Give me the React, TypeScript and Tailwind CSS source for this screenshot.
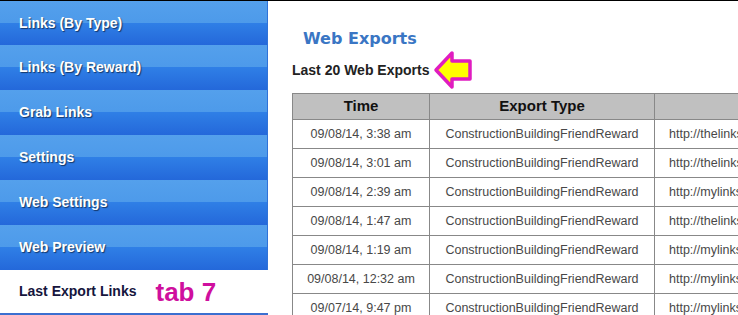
const navItems = ['Links (By Type)', 'Links (By Reward)', 'Grab Links', 'Settings', 'Web Settings', 'Web Preview'];

const exportsList = [
  { time: '09/08/14, 3:38 am', type: 'ConstructionBuildingFriendReward', url: 'http://thelinks' },
  { time: '09/08/14, 3:01 am', type: 'ConstructionBuildingFriendReward', url: 'http://thelinks' },
  { time: '09/08/14, 2:39 am', type: 'ConstructionBuildingFriendReward', url: 'http://mylinks' },
  { time: '09/08/14, 1:47 am', type: 'ConstructionBuildingFriendReward', url: 'http://thelinks' },
  { time: '09/08/14, 1:19 am', type: 'ConstructionBuildingFriendReward', url: 'http://mylinks' },
  { time: '09/08/14, 12:32 am', type: 'ConstructionBuildingFriendReward', url: 'http://mylinks' },
  { time: '09/07/14, 9:47 pm', type: 'ConstructionBuildingFriendReward', url: 'http://mylinks' },
];

function PointerArrow() {
  return (
    <svg width="40" height="42" viewBox="0 0 40 42" className="ml-[4px] shrink-0">
      <polygon
        points="3,21 19,4 19,12 37,12 37,30 19,30 19,38"
        fill="#ffff00"
        stroke="#e01cc0"
        strokeWidth="3.5"
        strokeLinejoin="round"
      />
    </svg>
  );
}

export default function App() {
  return (
    <div className="flex h-[315px] w-[738px] overflow-hidden border-t border-black bg-white font-['Liberation_Sans',Arial,sans-serif]">
      <nav className="flex w-[268px] shrink-0 flex-col">
        {navItems.map((label, i) => (
          <div
            key={label}
            className={`flex ${i === 0 ? 'h-[44px]' : 'h-[45px]'} items-center border-r border-[#2f72d8] bg-[linear-gradient(to_bottom,#54a0ec_0%,#4d9aea_50%,#2f7fe6_50%,#2468da_100%)] pl-[19px] text-[14px] font-bold text-white [text-shadow:1px_1px_1px_rgba(0,0,0,0.55)]`}
          >
            {label}
          </div>
        ))}
        <div className="flex h-[45px] items-center border-b-2 border-[#3b6fd0] bg-white pl-[19px]">
          <span className="text-[14px] font-bold text-[#15153d]">Last Export Links</span>
          <span className="ml-[19px] text-[26px] font-bold leading-none text-[#cf0f9e]">tab 7</span>
        </div>
      </nav>

      <main className="min-w-0 flex-1 overflow-hidden pl-[24px] pt-[28px]">
        <h1 className="pl-[11px] font-['DejaVu_Sans',Verdana,sans-serif] text-[16px] font-bold leading-[20px] text-[#3a76c4]">Web Exports</h1>
        <div className="flex items-center">
          <h2 className="text-[14px] font-bold text-[#222]">Last 20 Web Exports</h2>
          <PointerArrow />
        </div>
        <table className="mt-[2px] w-[640px] table-fixed border-collapse border border-[#888] text-[12.5px] text-[#484848]">
          <colgroup>
            <col className="w-[137px]" />
            <col className="w-[225px]" />
            <col />
          </colgroup>
          <thead>
            <tr className="h-[26px] bg-[#c0c0c0] text-[15px] font-bold text-[#111]">
              <th className="border border-[#888]">Time</th>
              <th className="border border-[#888]">Export Type</th>
              <th className="border border-[#888]"></th>
            </tr>
          </thead>
          <tbody>
            {exportsList.map((row) => (
              <tr key={row.time} className="h-[29px]">
                <td className="border border-[#888] text-center">{row.time}</td>
                <td className="border border-[#888] text-center">{row.type}</td>
                <td className="whitespace-nowrap border border-[#888] pl-[14px]">{row.url}</td>
              </tr>
            ))}
          </tbody>
        </table>
      </main>
    </div>
  );
}
